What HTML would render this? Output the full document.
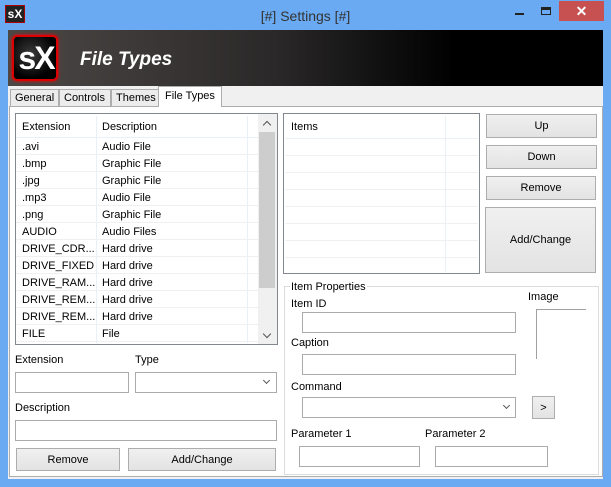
<!DOCTYPE html><html><head><style>
*{box-sizing:border-box;margin:0;padding:0}
body{width:611px;height:487px;overflow:hidden;background:#6aaaf2;font-family:"Liberation Sans",sans-serif;font-size:11px;color:#000;position:relative}
.a{position:absolute}
.t{position:absolute;white-space:nowrap;line-height:13px}
.in{position:absolute;background:#fff;border:1px solid #ababab}
.btn{position:absolute;background:linear-gradient(#f0f0f0,#e3e3e3);border:1px solid #adadad;text-align:center;display:flex;align-items:center;justify-content:center}
.row{position:absolute;left:1px;width:242px;height:17px;border-bottom:1px solid #f0f0f0}
.chev{position:absolute;width:6px;height:6px;border-right:1.5px solid #555;border-bottom:1.5px solid #555;transform:rotate(45deg)}
</style></head><body>
<!-- title bar -->
<div class="a" style="left:5px;top:5px;width:20px;height:18px;background:#222;border:1px solid #a00;color:#fff;font-weight:bold;font-size:12px;line-height:16px;text-align:center">sX</div>
<div class="t" style="left:0;width:611px;text-align:center;top:8px;font-size:14px;line-height:16px;color:#333">[#] Settings [#]</div>
<div class="a" style="left:515px;top:13px;width:9px;height:2px;background:#222"></div>
<div class="a" style="left:541px;top:7px;width:10px;height:8px;border:1.5px solid #222;border-top-width:3px"></div>
<div class="a" style="left:559px;top:1px;width:45px;height:20px;background:#c75050;color:#fff;text-align:center;font-size:14px;font-weight:bold;line-height:20px">✕</div>
<!-- client -->
<div class="a" style="left:8px;top:30px;width:595px;height:449px;background:#f0f0f0"></div>
<div class="a" style="left:8px;top:30px;width:595px;height:56px;background:linear-gradient(90deg,#4c4846 0%,#2a2828 45%,#000 75%)"></div>
<div class="a" style="left:12px;top:35px;width:46px;height:46px;border-radius:5px;background:radial-gradient(circle at 40% 40%,#3a3a3a,#000 70%);border:2px solid #d00;box-shadow:0 0 3px #f00"></div>
<div class="t" style="left:13px;top:38px;width:46px;text-align:center;color:#fff;font-size:32px;line-height:40px;font-weight:bold;letter-spacing:-2px">sX</div>
<div class="t" style="left:80px;top:49px;color:#fff;font-size:19px;line-height:22px;font-weight:bold;font-style:italic">File Types</div>
<!-- tabs -->
<div class="a" style="left:9px;top:106px;width:594px;height:371px;background:#fff;border:1px solid #adadad"></div>
<div class="a" style="left:10px;top:89px;width:49px;height:18px;background:#ececec;border:1px solid #adadad"></div><div class="t" style="left:15px;top:92px">General</div>
<div class="a" style="left:59px;top:89px;width:52px;height:18px;background:#ececec;border:1px solid #adadad"></div><div class="t" style="left:64px;top:92px">Controls</div>
<div class="a" style="left:111px;top:89px;width:48px;height:18px;background:#ececec;border:1px solid #adadad"></div><div class="t" style="left:116px;top:92px">Themes</div>
<div class="a" style="left:158px;top:86px;width:64px;height:21px;background:#fff;border:1px solid #adadad;border-bottom:none"></div><div class="t" style="left:165px;top:90px">File Types</div>
<!-- left list -->
<div class="a" style="left:15px;top:113px;width:263px;height:232px;border:1px solid #828790;background:#fff"></div>
<div class="a" style="left:96px;top:116px;width:1px;height:227px;background:#eaf0f8"></div>
<div class="a" style="left:247px;top:116px;width:1px;height:227px;background:#eaf0f8"></div>
<div class="t" style="left:22px;top:121px">Extension</div><div class="t" style="left:102px;top:121px">Description</div>
<div class="a" style="left:16px;top:137px;width:242px;height:1px;background:#eaf0f8"></div>
<div class="a" style="left:258px;top:114px;width:19px;height:230px;background:#f0f0f0"></div>
<div class="a" style="left:259px;top:132px;width:16px;height:156px;background:#cdcdcd"></div>
<div class="chev" style="left:264px;top:122px;transform:rotate(225deg)"></div>
<div class="chev" style="left:264px;top:331px"></div>
<div class="a" style="left:15px;top:138px">
<div class="row" style="top:0"><span class="t" style="left:6px;top:3px">.avi</span><span class="t" style="left:86px;top:3px">Audio File</span></div>
<div class="row" style="top:17px"><span class="t" style="left:6px;top:3px">.bmp</span><span class="t" style="left:86px;top:3px">Graphic File</span></div>
<div class="row" style="top:34px"><span class="t" style="left:6px;top:3px">.jpg</span><span class="t" style="left:86px;top:3px">Graphic File</span></div>
<div class="row" style="top:51px"><span class="t" style="left:6px;top:3px">.mp3</span><span class="t" style="left:86px;top:3px">Audio File</span></div>
<div class="row" style="top:68px"><span class="t" style="left:6px;top:3px">.png</span><span class="t" style="left:86px;top:3px">Graphic File</span></div>
<div class="row" style="top:85px"><span class="t" style="left:6px;top:3px">AUDIO</span><span class="t" style="left:86px;top:3px">Audio Files</span></div>
<div class="row" style="top:102px"><span class="t" style="left:6px;top:3px">DRIVE_CDR...</span><span class="t" style="left:86px;top:3px">Hard drive</span></div>
<div class="row" style="top:119px"><span class="t" style="left:6px;top:3px">DRIVE_FIXED</span><span class="t" style="left:86px;top:3px">Hard drive</span></div>
<div class="row" style="top:136px"><span class="t" style="left:6px;top:3px">DRIVE_RAM...</span><span class="t" style="left:86px;top:3px">Hard drive</span></div>
<div class="row" style="top:153px"><span class="t" style="left:6px;top:3px">DRIVE_REM...</span><span class="t" style="left:86px;top:3px">Hard drive</span></div>
<div class="row" style="top:170px"><span class="t" style="left:6px;top:3px">DRIVE_REM...</span><span class="t" style="left:86px;top:3px">Hard drive</span></div>
<div class="row" style="top:187px"><span class="t" style="left:6px;top:3px">FILE</span><span class="t" style="left:86px;top:3px">File</span></div>
</div>
<!-- left form -->
<div class="t" style="left:15px;top:354px">Extension</div>
<div class="t" style="left:135px;top:354px">Type</div>
<div class="in" style="left:15px;top:372px;width:114px;height:21px"></div>
<div class="in" style="left:135px;top:372px;width:142px;height:21px"></div>
<div class="chev" style="left:264px;top:378px;width:5px;height:5px"></div>
<div class="t" style="left:15px;top:402px">Description</div>
<div class="in" style="left:15px;top:420px;width:262px;height:21px"></div>
<div class="btn" style="left:16px;top:448px;width:104px;height:23px">Remove</div>
<div class="btn" style="left:128px;top:448px;width:148px;height:23px">Add/Change</div>
<!-- items list -->
<div class="a" style="left:283px;top:113px;width:197px;height:161px;border:1px solid #828790;background:#fff"></div>
<div class="t" style="left:291px;top:121px">Items</div>
<div class="a" style="left:445px;top:116px;width:1px;height:156px;background:#eaf0f8"></div>
<div class="a" style="left:285px;top:138px;width:193px;height:1px;background:#eaf0f8"></div>
<div class="a" style="left:285px;top:155px;width:193px;height:1px;background:#f0f0f0"></div>
<div class="a" style="left:285px;top:172px;width:193px;height:1px;background:#f0f0f0"></div>
<div class="a" style="left:285px;top:189px;width:193px;height:1px;background:#f0f0f0"></div>
<div class="a" style="left:285px;top:206px;width:193px;height:1px;background:#f0f0f0"></div>
<div class="a" style="left:285px;top:223px;width:193px;height:1px;background:#f0f0f0"></div>
<div class="a" style="left:285px;top:240px;width:193px;height:1px;background:#f0f0f0"></div>
<div class="a" style="left:285px;top:257px;width:193px;height:1px;background:#f0f0f0"></div>
<div class="btn" style="left:486px;top:114px;width:111px;height:24px">Up</div>
<div class="btn" style="left:486px;top:145px;width:111px;height:24px">Down</div>
<div class="btn" style="left:486px;top:176px;width:110px;height:24px">Remove</div>
<div class="btn" style="left:485px;top:207px;width:111px;height:66px">Add/Change</div>
<!-- item properties -->
<div class="a" style="left:284px;top:286px;width:315px;height:189px;border:1px solid #dcdcdc"></div>
<div class="t" style="left:290px;top:281px;background:#fff;padding:0 1px">Item Properties</div>
<div class="t" style="left:291px;top:298px">Item ID</div>
<div class="in" style="left:302px;top:312px;width:214px;height:21px"></div>
<div class="t" style="left:291px;top:337px">Caption</div>
<div class="in" style="left:302px;top:354px;width:214px;height:21px"></div>
<div class="t" style="left:291px;top:381px">Command</div>
<div class="in" style="left:302px;top:397px;width:214px;height:21px"></div>
<div class="chev" style="left:504px;top:403px;width:5px;height:5px"></div>
<div class="btn" style="left:532px;top:396px;width:23px;height:23px">&gt;</div>
<div class="t" style="left:291px;top:428px">Parameter 1</div>
<div class="t" style="left:425px;top:428px">Parameter 2</div>
<div class="in" style="left:299px;top:446px;width:121px;height:21px"></div>
<div class="in" style="left:435px;top:446px;width:113px;height:21px"></div>
<div class="t" style="left:528px;top:291px">Image</div>
<div class="a" style="left:536px;top:309px;width:50px;height:50px;border-left:1px solid #a0a0a0;border-top:1px solid #a0a0a0"></div>
</body></html>
